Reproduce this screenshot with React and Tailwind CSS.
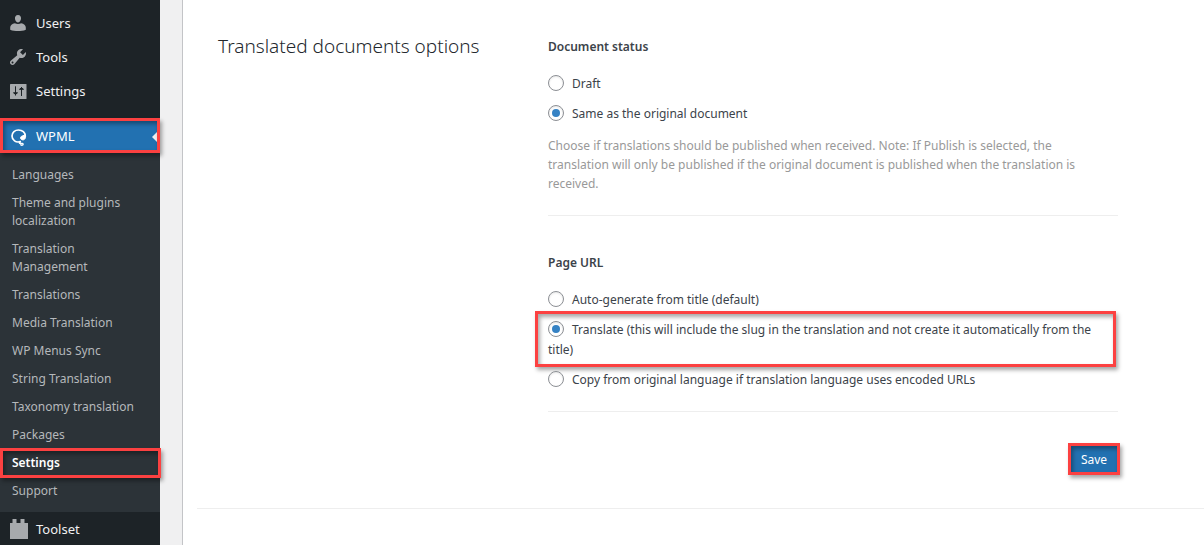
import React, { useState } from 'react';
import clsx from 'clsx';

const UsersIcon = () => (
  <svg viewBox="0 0 20 20" className="w-5 h-5 fill-current" aria-hidden="true">
    <path d="M10 9.400c-2.500 0-3-3.600-3-3.600C6.700 3.900 7.700 2 10 2s3.300 1.900 3 3.800c0 0-.5 3.600-3 3.600zM6.800 10.200c1.900 1 4.500 1 6.400 0 2.600.2 4.600 2.100 4.600 4.300v2.200c-2.400 1-5.100 1.400-7.800 1.400s-5.400-.4-7.800-1.400v-2.200c0-2.200 2-4.100 4.600-4.300z" />
  </svg>
);

const ToolsIcon = () => (
  <svg viewBox="0 0 20 20" className="w-5 h-5 fill-current" aria-hidden="true">
    <path d="M16.68 9.77c-1.34 1.34-3.3 1.67-4.95.99l-5.41 6.52c-.99.99-2.59.99-3.58 0s-.99-2.59 0-3.57l6.52-5.42c-.68-1.65-.35-3.61.99-4.95 1.28-1.28 3.12-1.62 4.72-1.06l-2.89 2.89 2.82 2.82 2.86-2.87c.53 1.58.18 3.39-1.08 4.65zM3.81 16.21c.4.39 1.04.39 1.43 0 .4-.4.4-1.04 0-1.43-.39-.4-1.03-.4-1.43 0-.39.39-.39 1.03 0 1.43z" />
  </svg>
);

const SettingsIcon = () => (
  <svg viewBox="0 0 20 20" className="w-5 h-5" aria-hidden="true">
    <path d="M2.500 3h15.500a.5.5 0 0 1 .5.5v14a.5.5 0 0 1-.5.5h-15.500a.5.5 0 0 1-.5-.5v-14a.5.5 0 0 1 .5-.5z" fill="currentColor" />
    <path d="M7.500 5.300v9.200M13.500 6v9M5.500 11.800h4l-2 1.600zM11.500 8.300h4l-2-1.600z" fill="#1d2327" stroke="#1d2327" />
  </svg>
);

const WpmlIcon = () => (
  <svg viewBox="0 0 20 20" className="w-5 h-5" fill="none" stroke="currentColor" strokeLinecap="round" aria-hidden="true">
    <path d="M12.300 15.600C8 17 4 14.200 4 10.100c0-3.700 3-6.100 6.500-6.100 3.900 0 6.800 2.600 6.800 6" strokeWidth="1.700" />
    <path d="M17.200 8.500c1.300 3.300-.6 5.600-2.500 5.400-1.700-.1-2.500-1.500-1.900-2.900.7-1.500 3.100-.8 4.400-2.500z" fill="currentColor" strokeWidth="1" />
    <path d="M12.300 15.600c-1.200 1-1.100 2.200.3 1.900s2.500-.2 2.500.7-1.300 1.300-2.200.7" strokeWidth="1.400" />
  </svg>
);

const ToolsetIcon = () => (
  <svg viewBox="0 0 20 20" className="w-5 h-5 ml-0.5 fill-current" aria-hidden="true">
    <path d="M1 20V4h2.500V0h4v4h4V0h4v4H19v16z" />
  </svg>
);

const MENU = [
  { label: 'Users', icon: UsersIcon },
  { label: 'Tools', icon: ToolsIcon },
  { label: 'Settings', icon: SettingsIcon },
];

const SUBMENU = [
  'Languages',
  'Theme and plugins localization',
  'Translation Management',
  'Translations',
  'Media Translation',
  'WP Menus Sync',
  'String Translation',
  'Taxonomy translation',
  'Packages',
  'Settings',
  'Support',
];

/** Red frame laid over the element it points at. */
const Highlight = ({ className }) => (
  <span
    className={clsx(
      'absolute pointer-events-none border-3 border-[#fc4141] shadow-[2px_3px_4px_rgba(0,0,0,0.35),inset_2px_3px_4px_rgba(0,0,0,0.35)]',
      className
    )}
  />
);

const MenuItem = ({ label, icon: Icon, current, children }) => (
  <a
    href="#"
    className={clsx(
      'relative flex items-center h-[34px] text-[13px]',
      current ? 'bg-[#2271b1] text-white' : 'text-[#f0f0f1]'
    )}
  >
    <span className={clsx('flex justify-center w-9', !current && 'text-[#a7aaad]')}>
      <Icon />
    </span>
    <span className="pt-0.5">{label}</span>
    {children}
  </a>
);

const Sidebar = () => (
  <nav className="w-40 shrink-0 bg-[#1d2327] pt-1.5">
    {MENU.map((item) => (
      <MenuItem key={item.label} {...item} />
    ))}
    <div className="h-[11px]" />
    <MenuItem label="WPML" icon={WpmlIcon} current>
      <span className="absolute right-0 top-2.5 border-y-8 border-r-8 border-y-transparent border-r-[#f0f0f1]" />
      <Highlight className="-top-px inset-x-0 bottom-0" />
    </MenuItem>
    <ul className="bg-[#2c3338] pt-2 pb-[7px]">
      {SUBMENU.map((label) => {
        const current = label === 'Settings';
        return (
          <li key={label} className="relative">
            <a
              href="#"
              className={clsx(
                'block pl-3 pr-5 py-[5px] text-[12px] leading-[18px]',
                current ? 'text-white font-semibold' : 'text-[#b5b8bb]'
              )}
            >
              {label}
            </a>
            {current && <Highlight className="-inset-y-px left-0 -right-px" />}
          </li>
        );
      })}
    </ul>
    <MenuItem label="Toolset" icon={ToolsetIcon} />
  </nav>
);

const Radio = ({ name, value, selected, onSelect, label, highlighted }) => (
  <label className="relative block leading-5">
    <input
      type="radio"
      name={name}
      checked={selected === value}
      onChange={() => onSelect(value)}
      className="appearance-none inline-grid place-content-center align-middle w-4 h-4 mr-2 -mt-1 bg-white border border-[#8c8f94] rounded-full shadow-[inset_0_1px_2px_rgba(0,0,0,0.1)] checked:before:content-[''] checked:before:w-2 checked:before:h-2 checked:before:rounded-full checked:before:bg-[#3582c4]"
    />
    {label}
    {highlighted && <Highlight className="-top-[9px] -bottom-[7px] -left-[13px] right-0.5" />}
  </label>
);

const OptionGroup = ({ title, name, options, initial, note }) => {
  const [selected, setSelected] = useState(initial);
  return (
    <fieldset>
      <legend className="leading-5 font-semibold">{title}</legend>
      <div className="mt-[17px] space-y-2.5">
        {options.map((opt) => (
          <Radio key={opt.value} name={name} selected={selected} onSelect={setSelected} {...opt} />
        ))}
      </div>
      {note && <p className="mt-3 pr-6 leading-[19px] text-[#999]">{note}</p>}
    </fieldset>
  );
};

const STATUS_OPTIONS = [
  { value: 'draft', label: 'Draft' },
  { value: 'same', label: 'Same as the original document' },
];

const URL_OPTIONS = [
  { value: 'auto', label: 'Auto-generate from title (default)' },
  {
    value: 'translate',
    label: 'Translate (this will include the slug in the translation and not create it automatically from the title)',
    highlighted: true,
  },
  { value: 'copy', label: 'Copy from original language if translation language uses encoded URLs' },
];

const App = () => (
  <div className="flex h-screen overflow-hidden bg-[#f0f0f1] font-['Noto_Sans','Open_Sans',sans-serif] text-[12px] text-[#3c434a]">
    <Sidebar />
    <main className="flex-1 ml-[22px] pl-3.5 bg-white border-l border-[#c3c4c7]">
      <section className="flex pt-[37px] pb-[33px] pl-[21px] border-b border-[#eee]">
        <h2 className="w-[330px] shrink-0 text-[19px] leading-[18px] font-light text-[#23282d]">
          Translated documents options
        </h2>
        <form className="w-full max-w-[570px]" onSubmit={(e) => e.preventDefault()}>
          <OptionGroup
            title="Document status"
            name="status"
            options={STATUS_OPTIONS}
            initial="same"
            note="Choose if translations should be published when received. Note: If Publish is selected, the translation will only be published if the original document is published when the translation is received."
          />
          <hr className="mt-[22px] mb-[37px] border-[#eee]" />
          <OptionGroup title="Page URL" name="url" options={URL_OPTIONS} initial="translate" />
          <hr className="mt-[21px] mb-[31px] border-[#eee]" />
          <div className="flex justify-end -mr-0.5">
            <button type="submit" className="relative h-8 w-[52px] pt-0.5 bg-[#2271b1] text-white">
              Save
              <Highlight className="inset-0" />
            </button>
          </div>
        </form>
      </section>
    </main>
  </div>
);

export default App;
